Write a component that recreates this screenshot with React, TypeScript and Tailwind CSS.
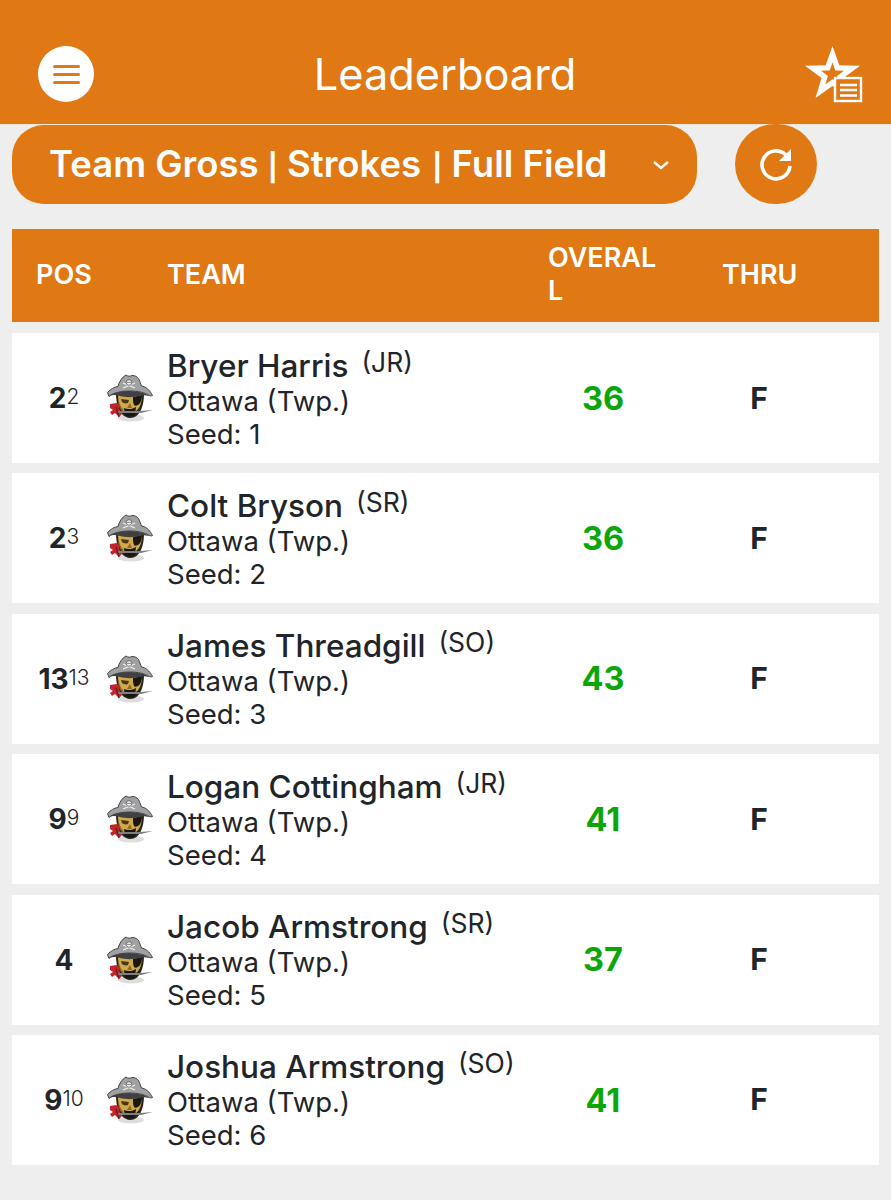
import React from "react";

function Pirate() {
  return (
    <svg width="48" height="48" viewBox="0 0 48 48" className="shrink-0">
      <ellipse cx="25" cy="44" rx="13" ry="3.500" fill="#dddddd" />
      <path d="M10 19c0 11 3 24 14 25 10 0 14-12 14-25z" fill="#2a251b" />
      <path d="M12 21c0 7 2 13 5 16h13c4-3 6-9 6-16z" fill="#d0a94c" />
      <path d="M12 23c1 6 3 11 6 13l-2 1c-3-3-4-8-4-14z" fill="#8a6a2a" />
      <path d="M27 23l9-2c0 4-1 8-4 10-2 1-3 1-4 0-1-2-1-5-1-8z" fill="#1b1812" />
      <path d="M15 25l8 1-1 3c-2 1-5 0-6-1z" fill="#4a3814" />
      <path d="M24 29l2 5h-5z" fill="#8f6a22" />
      <path d="M18 34c4 2 9 1 12-1l-1 8c-3 2-8 2-10 0z" fill="#1a1710" />
      <path d="M1.500 18.500C5 15 8 13 12 12.500 13 8 16 3 20 1c2 1.500 4 1.500 6 .5 3 0 5 1 6.500 3 1 2 2 5 3 7.500 4 .5 8 3.500 11 9.500-1 .5-2 .5-3 0-5-3-11-4.500-20-4.500S7 19 3 22.500z" fill="#a0a1a3" stroke="#444" strokeWidth="1" />
      <path d="M3 21.500C8 18.500 15 17 23 17s15 1.500 21 5c-6-1-9-1-11 0-5 1.500-14 1.500-19 0-4-1.500-8-1-11-.5z" fill="#404042" />
      <path d="M17 9l12 5M29 9l-12 5" stroke="#f0f0f0" strokeWidth="1.300" />
      <circle cx="23" cy="8.500" r="2.800" fill="#f0f0f0" stroke="#333" strokeWidth=".6" />
      <circle cx="22" cy="8.300" r=".6" fill="#222" />
      <circle cx="24" cy="8.300" r=".6" fill="#222" />
      <path d="M4 30l7-1 3 3-1 3 3 5-3 3-4-4-3 2-2-3 3-2-3-2z" fill="#c4232b" />
      <path d="M12 37h22l13-1-12 3H12z" fill="#7d7f83" />
      <path d="M10 33l3 10" stroke="#6f1a1a" strokeWidth="1.300" />
    </svg>
  );
}

const rows = [
  { pos: "2", sup: "2", name: "Bryer Harris", yr: "(JR)", seed: 1, score: 36 },
  { pos: "2", sup: "3", name: "Colt Bryson", yr: "(SR)", seed: 2, score: 36 },
  { pos: "13", sup: "13", name: "James Threadgill", yr: "(SO)", seed: 3, score: 43 },
  { pos: "9", sup: "9", name: "Logan Cottingham", yr: "(JR)", seed: 4, score: 41 },
  { pos: "4", sup: "", name: "Jacob Armstrong", yr: "(SR)", seed: 5, score: 37 },
  { pos: "9", sup: "10", name: "Joshua Armstrong", yr: "(SO)", seed: 6, score: 41 },
];

function Pipe() {
  return <span className="text-[27px] font-bold">|</span>;
}

export default function App() {
  return (
    <div className="w-[891px] h-[1200px] overflow-hidden bg-[#eeeeee] font-['Inter',sans-serif] text-[#212529]">
      <header className="h-[124px] bg-[#e07814] flex items-start px-[38px] pt-[46px] justify-between">
        <div className="w-[56px] h-[56px] rounded-full bg-white flex flex-col items-center justify-center gap-[5px]">
          <span className="block w-[27px] h-[3px] rounded-full bg-[#e07814]" />
          <span className="block w-[27px] h-[3px] rounded-full bg-[#e07814]" />
          <span className="block w-[27px] h-[3px] rounded-full bg-[#e07814]" />
        </div>
        <h1 className="text-[43.300px] leading-[56px] font-normal text-white pr-[8px]">Leaderboard</h1>
        <svg width="60" height="58" viewBox="0 0 60 58" className="-mr-[11px]">
          <path
            fillRule="evenodd"
            d="M28.500 0L35.300 19.200 56 19.700 39.500 32 45.500 52 28.500 40 11.500 52 17.500 32 1 19.700 21.700 19.200zM28.500 16.500L25.700 24.600 17.100 24.800 23.900 30 21.400 38.200 28.500 33.300 35.600 38.200 33.100 30 39.900 24.800 31.300 24.600z"
            fill="white"
          />
          <rect x="31" y="32" width="26" height="23" fill="#e07814" stroke="white" strokeWidth="2.400" />
          <path d="M36 39h17M36 44h17M36 49.500h17" stroke="white" strokeWidth="2.600" />
        </svg>
      </header>
      <div className="h-px bg-[#f5e6d6]" />
      <div className="flex items-start pl-[12px]">
        <div className="w-[685px] h-[79px] rounded-[32px] bg-[#e07814] flex items-center justify-between pl-[37px] pr-[27px]">
          <span className="text-[36.500px] font-semibold text-white whitespace-nowrap">Team Gross <Pipe /> Strokes <span className="ml-[2px]"><Pipe /></span> Full Field</span>
          <svg width="18" height="10" viewBox="0 0 18 10" className="shrink-0"><path d="M2 2l7 6 7-6" fill="none" stroke="white" strokeWidth="2.400" /></svg>
        </div>
        <div className="ml-[38px] -mt-px w-[82px] h-[80px] rounded-full bg-[#e07814] flex items-center justify-center">
          <svg width="36" height="36" viewBox="0 0 36 36">
            <path d="M28 9a14 14 0 1 0 4 11" fill="none" stroke="white" strokeWidth="3.600" />
            <path d="M33 3v12H21z" fill="white" />
          </svg>
        </div>
      </div>
      <div className="mx-[12px] mt-[25px] h-[93px] pb-[3px] bg-[#e07814] flex items-center text-white font-semibold text-[27px] leading-[33px]">
        <div className="w-[155px] pl-[24px]">POS</div>
        <div className="w-[381px]">TEAM</div>
        <div className="w-[174px] pr-[58px] break-all">OVERALL</div>
        <div>THRU</div>
      </div>
      <div className="mx-[12px] mt-[11px] flex flex-col gap-[10.4px]">
        {rows.map((r) => (
          <div key={r.name} className="h-[130px] bg-white flex items-center">
            <div className="w-[94px] pl-[10px] text-center text-[28px] font-bold leading-none whitespace-nowrap">
              {r.pos}
              {r.sup && <span className="text-[21px] font-light align-[4px]">{r.sup}</span>}
            </div>
            <Pirate />
            <div className="w-[394px] pl-[13px] pt-[2px]">
              <div className="text-[31.5px] leading-[36px] font-medium whitespace-nowrap">
                {r.name}
                <span className="text-[26.500px] font-normal ml-[13px] relative -top-[5px]">{r.yr}</span>
              </div>
              <div className="text-[27.500px] leading-[34px] -mt-px">Ottawa (Twp.)</div>
              <div className="text-[27.500px] leading-[33px]">Seed: {r.seed}</div>
            </div>
            <div className="w-[110px] text-center text-[32.500px] font-bold text-[#0aa60a] pt-[2px]">{r.score}</div>
            <div className="w-[202px] text-center text-[30px] font-bold">F</div>
          </div>
        ))}
      </div>
    </div>
  );
}
